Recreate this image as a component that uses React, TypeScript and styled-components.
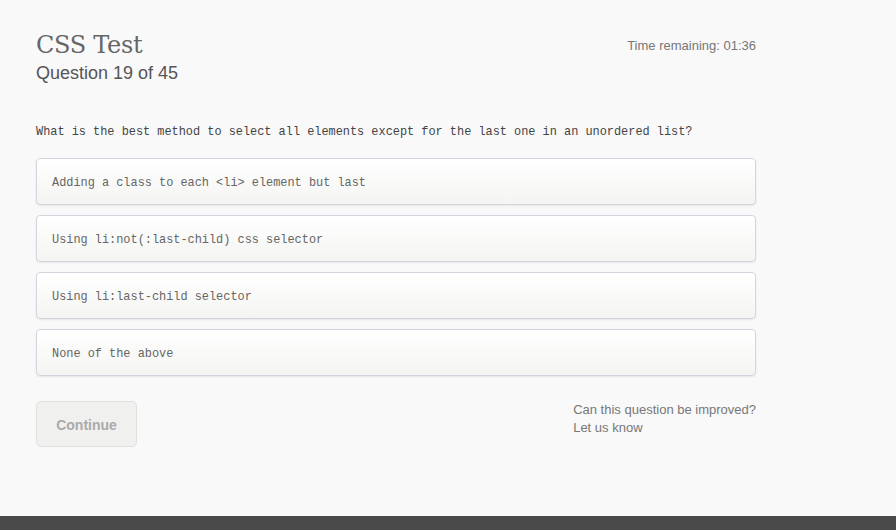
import styled, { createGlobalStyle } from "styled-components";

const options = [
  "Adding a class to each <li> element but last",
  "Using li:not(:last-child) css selector",
  "Using li:last-child selector",
  "None of the above",
];

export default function App() {
  return (
    <>
      <GlobalStyle />
      <Page>
        <Main>
          <Header>
            <div>
              <Title>CSS Test</Title>
              <Subtitle>Question 19 of 45</Subtitle>
            </div>
            <Timer>Time remaining: 01:36</Timer>
          </Header>
          <Question>
            What is the best method to select all elements except for the last
            one in an unordered list?
          </Question>
          <Options>
            {options.map((o) => (
              <Option key={o}>{o}</Option>
            ))}
          </Options>
          <Footer>
            <ContinueBtn disabled>Continue</ContinueBtn>
            <Feedback>
              Can this question be improved?
              <br />
              <FeedbackLink>Let us know</FeedbackLink>
            </Feedback>
          </Footer>
        </Main>
        <BottomBar />
      </Page>
    </>
  );
}

const GlobalStyle = createGlobalStyle`
  body {
    margin: 0;
    background: #f9f9f9;
    font-family: "Liberation Sans", Arial, sans-serif;
  }
`;

const Page = styled.div`
  height: 530px;
  display: flex;
  flex-direction: column;
  background: #f9f9f9;
`;

const Main = styled.div`
  flex: 1;
  width: 720px;
  padding: 30px 0 0 36px;
`;

const Header = styled.div`
  display: flex;
  justify-content: space-between;
  align-items: flex-start;
`;

const Title = styled.h1`
  margin: 0;
  font-family: "DejaVu Serif", "Liberation Serif", serif;
  font-weight: 400;
  font-size: 24px;
  line-height: 30px;
  color: #666;
  letter-spacing: -0.3px;
`;

const Subtitle = styled.div`
  margin-top: 2px;
  font-size: 18px;
  line-height: 22px;
  color: #555;
`;

const Timer = styled.div`
  margin-top: 8px;
  font-size: 13px;
  color: #777;
`;

const Question = styled.p`
  margin: 40px 0 0;
  font-family: "Liberation Mono", monospace;
  font-size: 11.9px;
  line-height: 16px;
  color: #444;
`;

const Options = styled.div`
  display: flex;
  flex-direction: column;
  gap: 10px;
  margin-top: 18px;
`;

const Option = styled.div`
  height: 47px;
  box-sizing: border-box;
  display: flex;
  align-items: center;
  padding: 2px 15px 0;
  border: 1px solid #d4d4de;
  border-radius: 4px;
  background: linear-gradient(#ffffff, #f4f4f2);
  box-shadow: 0 1px 2px rgba(0, 0, 0, 0.08);
  font-family: "Liberation Mono", monospace;
  font-size: 11.9px;
  color: #666;
  cursor: pointer;
`;

const Footer = styled.div`
  display: flex;
  justify-content: space-between;
  align-items: flex-start;
  margin-top: 25px;
`;

const ContinueBtn = styled.button`
  width: 101px;
  height: 46px;
  padding-top: 2px;
  border: 1px solid #e0e0de;
  border-radius: 5px;
  background: #f0f0ee;
  color: #aaa;
  font-family: "Liberation Sans", Arial, sans-serif;
  font-weight: 700;
  font-size: 14px;
`;

const Feedback = styled.div`
  font-size: 13px;
  line-height: 18px;
  color: #777;
`;

const FeedbackLink = styled.a`
  color: #777;
  cursor: pointer;
`;

const BottomBar = styled.div`
  height: 14px;
  background: #4a4a4a;
`;
